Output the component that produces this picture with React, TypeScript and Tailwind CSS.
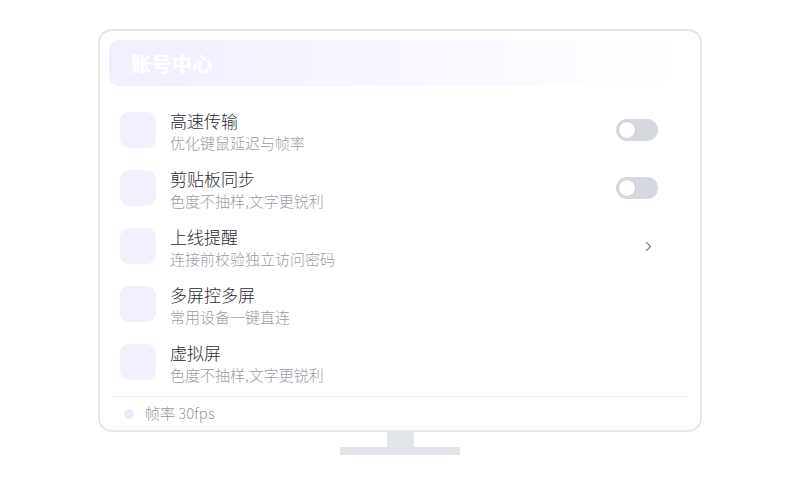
import React from 'react';

type Row = {
  title: string;
  desc: string;
  action: 'toggle' | 'chevron' | 'none';
};

const rows: Row[] = [
  { title: '高速传输', desc: '优化键鼠延迟与帧率', action: 'toggle' },
  { title: '剪贴板同步', desc: '色度不抽样,文字更锐利', action: 'toggle' },
  { title: '上线提醒', desc: '连接前校验独立访问密码', action: 'chevron' },
  { title: '多屏控多屏', desc: '常用设备一键直连', action: 'none' },
  { title: '虚拟屏', desc: '色度不抽样,文字更锐利', action: 'none' },
];

function Toggle() {
  return (
    <div className="w-[42px] h-[22px] rounded-full bg-[#d5d8de] p-[2px] flex items-center">
      <div className="w-[18px] h-[18px] rounded-full bg-white border border-[#c9ccd3]" />
    </div>
  );
}

function Chevron() {
  return (
    <svg width="7" height="11" viewBox="0 0 7 11" className="mr-[6px]">
      <path d="M1.5 1.5 L5.5 5.5 L1.5 9.5" fill="none" stroke="#8a8f98" strokeWidth="1.3" strokeLinecap="round" strokeLinejoin="round" />
    </svg>
  );
}

export default function App() {
  return (
    <div
      className="w-[800px] h-[500px] bg-white flex flex-col items-center pt-[29px]"
      style={{ fontFamily: '"Noto Sans CJK SC", "Noto Sans", sans-serif' }}
    >
      {/* Screen */}
      <div className="w-[604px] h-[403px] rounded-[14px] border-2 border-[#e4e6ea] bg-white pt-[9px] px-[9px] pb-0 flex flex-col">
        <div className="h-[46px] rounded-[9px] bg-gradient-to-r from-[#f2effe] via-[#f8f6ff] to-white flex items-center pl-[22px] pt-[2px]">
          <span className="text-white text-[20px] font-bold tracking-[0.5px]">账号中心</span>
        </div>

        <div className="flex flex-col mt-[15px] pl-[11px] pr-[33px]">
          {rows.map((r) => (
            <div key={r.title} className="h-[58px] flex items-center">
              <div className="w-[36px] h-[36px] rounded-[9px] bg-[#f3f0fe] shrink-0" />
              <div className="flex flex-col ml-[14px] flex-1 pt-[3px]">
                <span className="text-[17px] leading-[22px] font-light text-[#2b2c30]">{r.title}</span>
                <span className="text-[15px] leading-[20px] font-light text-[#9a9ea6] mt-[1px]">{r.desc}</span>
              </div>
              {r.action === 'toggle' && <Toggle />}
              {r.action === 'chevron' && <Chevron />}
            </div>
          ))}
        </div>

        <div className="mt-auto border-t border-[#eef0f3] mx-[2px] h-[34px] flex items-center pl-[13px]">
          <div className="w-[10px] h-[10px] rounded-full bg-[#ece9fb]" />
          <span className="ml-[11px] text-[15px] font-light text-[#94989f]">帧率 30fps</span>
        </div>
      </div>

      {/* Stand */}
      <div className="w-[27px] h-[15px] bg-[#e2e5e9]" />
      <div className="w-[120px] h-[8px] bg-[#e2e5e9]" />
    </div>
  );
}
